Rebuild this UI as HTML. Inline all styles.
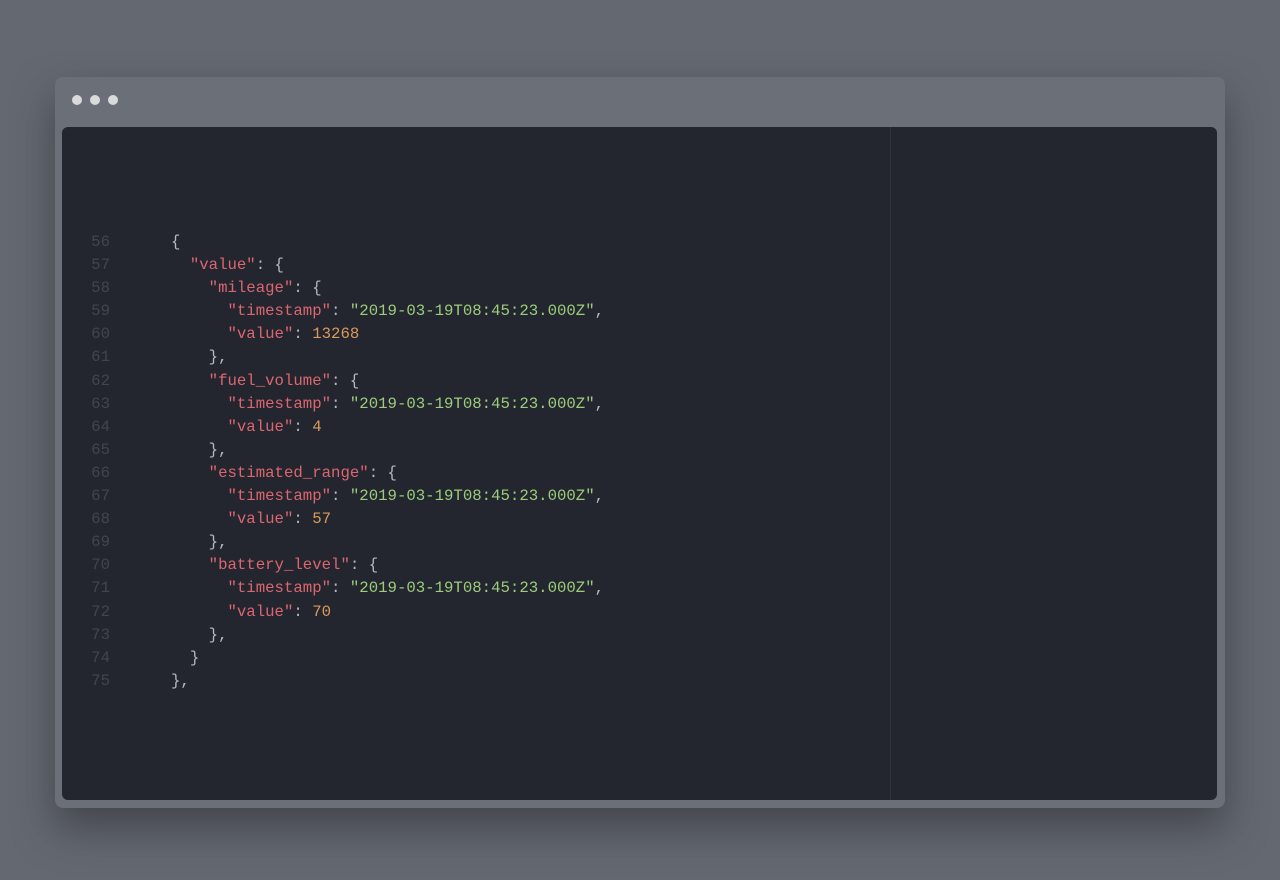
<!DOCTYPE html>
<html><head><meta charset="utf-8"><style>
html,body{margin:0;padding:0;width:1280px;height:880px;overflow:hidden;background:#646870;}
.win{position:absolute;left:55px;top:77px;width:1170px;height:731px;background:#6b6f77;border-radius:8px;box-shadow:0 20px 40px rgba(40,42,48,.55);}
.dot{position:absolute;top:18px;width:10px;height:10px;border-radius:50%;background:#d9dadc;}
.panel{position:absolute;left:7px;top:50px;width:1155px;height:673px;background:#23262e;border-radius:6px;overflow:hidden;}
.div{position:absolute;left:828px;top:0;width:1px;height:100%;background:#33363e;}
.code{position:absolute;left:0;top:104px;font-family:"Liberation Mono",monospace;font-size:15.7px;line-height:23.1px;color:#b3b8c2;white-space:pre;}
.ln{display:inline-block;width:48px;text-align:right;color:#41454f;margin-right:61px;}
.k{color:#dc6670}.s{color:#9ccc7c}.n{color:#d99a5c}
.c{margin-left:-3px}
</style></head><body>
<div class="win">
<div class="dot" style="left:17px"></div><div class="dot" style="left:35px"></div><div class="dot" style="left:53px"></div>
<div class="panel"><div class="div"></div>
<div class="code"><span class="ln">56</span>{
<span class="ln">57</span>  <span class="k">"value"</span>: {
<span class="ln">58</span>    <span class="k">"mileage"</span>: {
<span class="ln">59</span>      <span class="k">"timestamp"</span>: <span class="s">"2019-03-19T08:45:23.000Z"</span>,
<span class="ln">60</span>      <span class="k">"value"</span>: <span class="n">13268</span>
<span class="ln">61</span>    },
<span class="ln">62</span>    <span class="k">"fuel_volume"</span>: {
<span class="ln">63</span>      <span class="k">"timestamp"</span>: <span class="s">"2019-03-19T08:45:23.000Z"</span>,
<span class="ln">64</span>      <span class="k">"value"</span>: <span class="n">4</span>
<span class="ln">65</span>    },
<span class="ln">66</span>    <span class="k">"estimated_range"</span>: {
<span class="ln">67</span>      <span class="k">"timestamp"</span>: <span class="s">"2019-03-19T08:45:23.000Z"</span>,
<span class="ln">68</span>      <span class="k">"value"</span>: <span class="n">57</span>
<span class="ln">69</span>    },
<span class="ln">70</span>    <span class="k">"battery_level"</span>: {
<span class="ln">71</span>      <span class="k">"timestamp"</span>: <span class="s">"2019-03-19T08:45:23.000Z"</span>,
<span class="ln">72</span>      <span class="k">"value"</span>: <span class="n">70</span>
<span class="ln">73</span>    },
<span class="ln">74</span>  }
<span class="ln">75</span>},</div>
</div></div>
</body></html>
